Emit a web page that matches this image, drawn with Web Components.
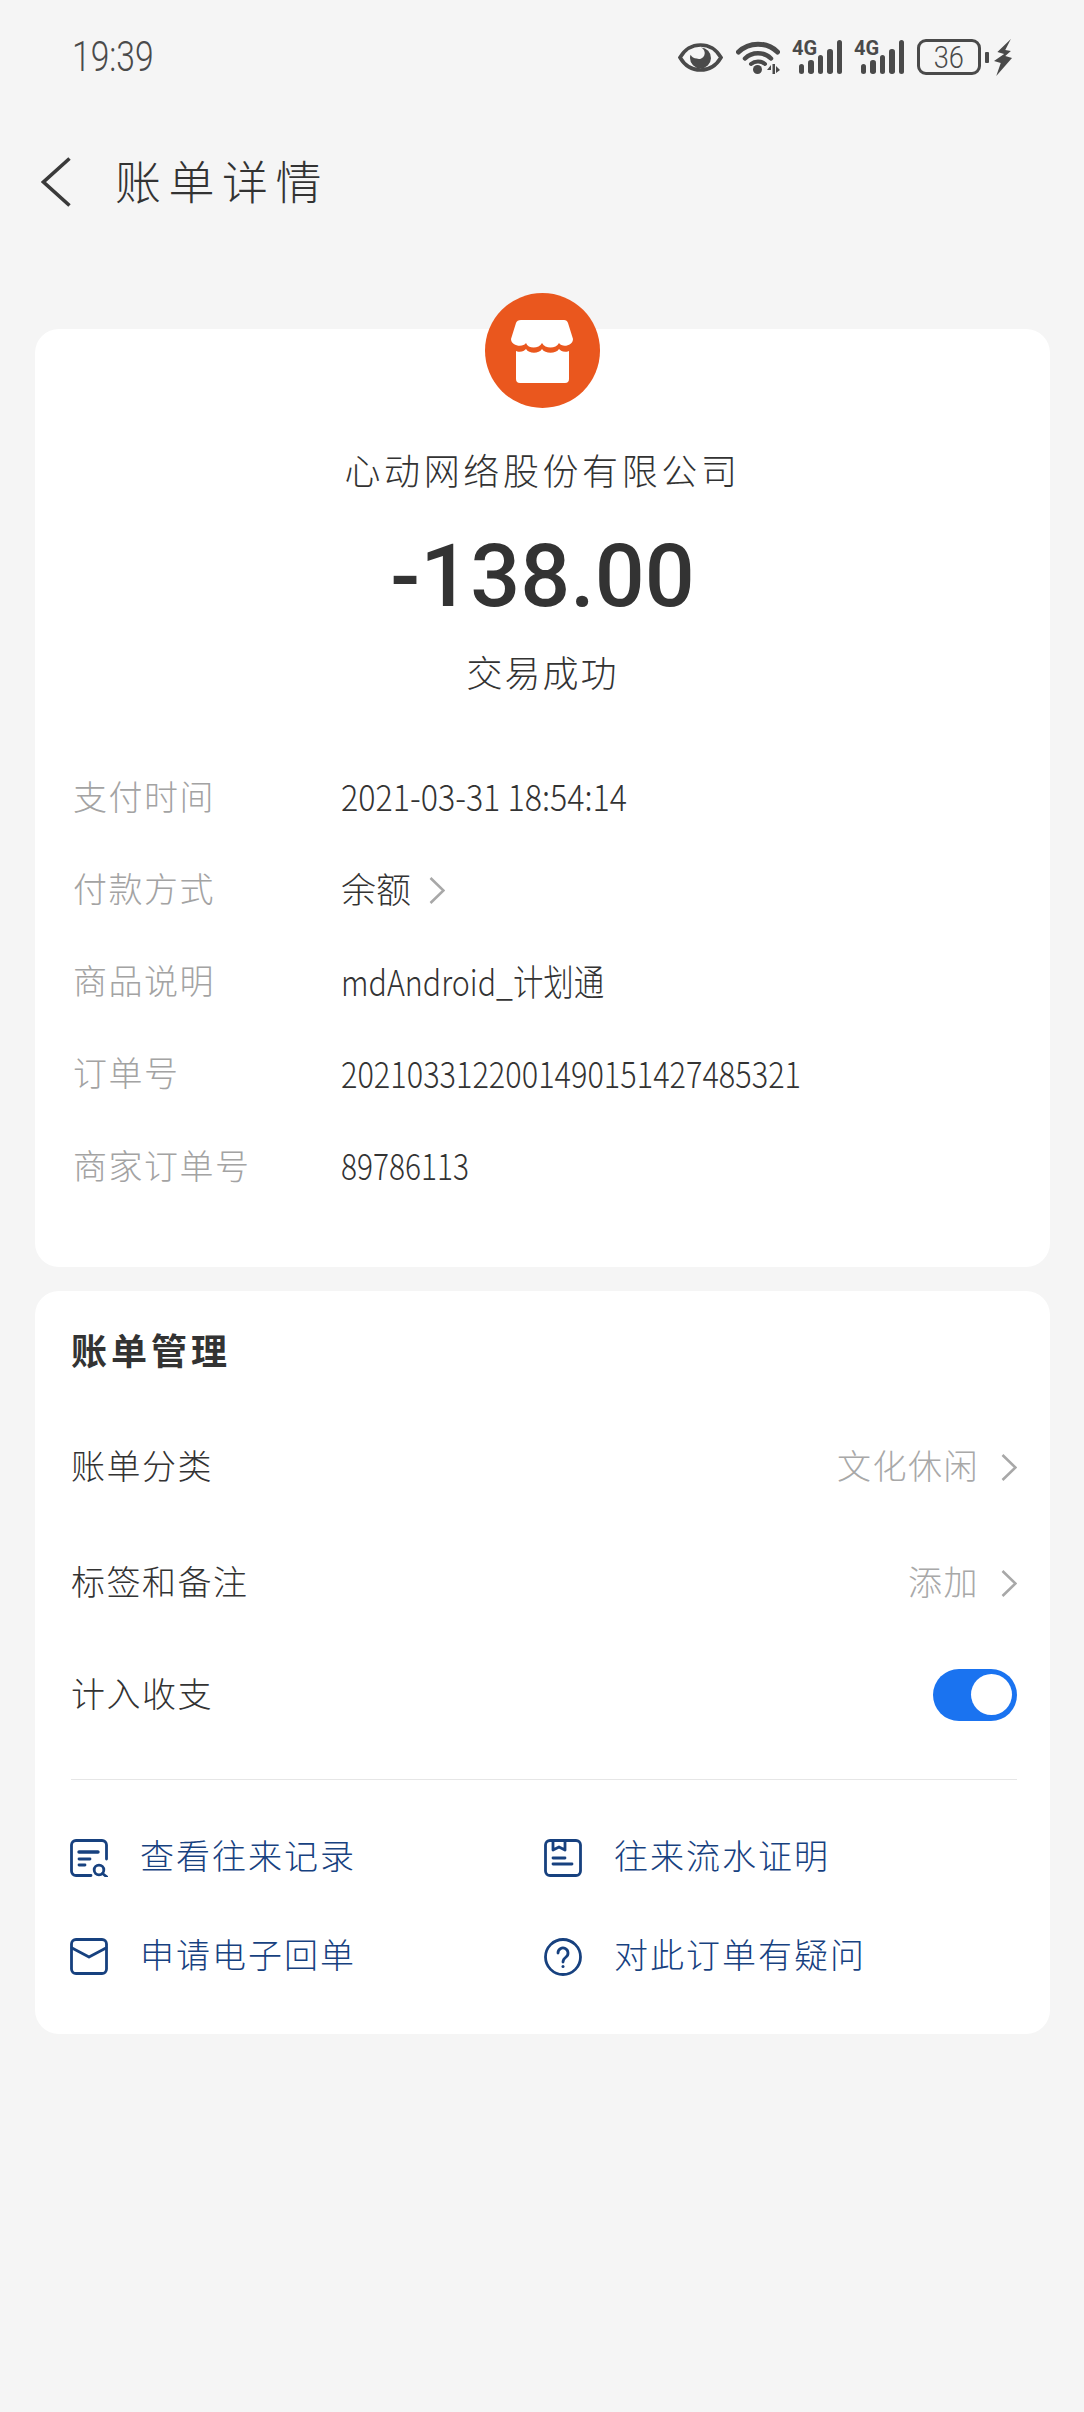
<!DOCTYPE html>
<html lang="zh">
<head>
<meta charset="utf-8">
<title>账单详情</title>
<style>
  html, body { margin: 0; padding: 0; }
  body {
    background: #f5f5f5;
    color: #333;
    font-family: "Noto Sans CJK SC", "Noto Sans", sans-serif;
    font-weight: 300;
    min-height: 2412px;
  }
</style>
</head>
<body>
<status-bar></status-bar>
<nav-header>账单详情</nav-header>

<bill-card style="margin-top:79px;height:938px">
  <bill-summary company="心动网络股份有限公司" amount="-138.00" state="交易成功"></bill-summary>
  <info-row label="支付时间" style="--squeeze:.895">2021-03-31 18:54:14</info-row>
  <info-row label="付款方式"><span style="font-size:35px">余额</span><chevron-icon style="margin:6px 0 0 18px"></chevron-icon></info-row>
  <info-row label="商品说明" style="--squeeze:.845">mdAndroid_计划通</info-row>
  <info-row label="订单号" style="--squeeze:.853">2021033122001490151427485321</info-row>
  <info-row label="商家订单号" style="--squeeze:.83">89786113</info-row>
</bill-card>

<bill-card style="margin-top:24px;height:743px">
  <manage-panel>
    <manage-row style="height:116px">账单分类<span slot="right">文化休闲</span><chevron-icon slot="right" style="margin-left:22px"></chevron-icon></manage-row>
    <manage-row style="height:116px">标签和备注<span slot="right">添加</span><chevron-icon slot="right" style="margin-left:22px"></chevron-icon></manage-row>
    <manage-row style="height:108px">计入收支<toggle-switch slot="right"></toggle-switch></manage-row>
    <link-item slot="links" icon="search">查看往来记录</link-item>
    <link-item slot="links" icon="book">往来流水证明</link-item>
    <link-item slot="links" icon="mail">申请电子回单</link-item>
    <link-item slot="links" icon="help">对此订单有疑问</link-item>
  </manage-panel>
</bill-card>

<script>
// status bar: clock on the left, indicators on the right
class SignalIcon extends HTMLElement {
  constructor() {
    super();
    this.root = this.attachShadow({mode: 'open'});
    this.root.innerHTML = `
    <style>
      :host { display: block; position: relative; width: 50px; height: 34px; }
      .bars { display: flex; align-items: flex-end; justify-content: flex-end; gap: 4px; height: 34px; }
      .bars i { display: block; width: 5.5px; background: #4a4a4a; border-radius: 2.75px; }
      .net {
        position: absolute; left: 0; top: 0;
        font: 700 20px/16px Roboto, sans-serif;
        color: #4a4a4a;
      }
    </style>
    <div class="bars">
      <i style="height:10px"></i><i style="height:14px"></i><i style="height:19px"></i><i style="height:25px"></i><i style="height:34px"></i>
    </div>
    <span class="net">4G</span>`;
  }
}
customElements.define('signal-icon', SignalIcon);

class StatusBar extends HTMLElement {
  constructor() {
    super();
    this.root = this.attachShadow({mode: 'open'});
    this.root.innerHTML = `
    <style>
      :host {
        display: flex; align-items: center; justify-content: space-between;
        box-sizing: border-box; height: 114px; padding: 0 72px 0 72px; color: #4a4a4a;
      }
      .time {
        display: inline-block; transform: scaleX(.8); transform-origin: left center;
        font: 300 42px/44px Roboto, sans-serif;
      }
      .icons { display: flex; align-items: center; }
      svg { display: block; }
      .battery {
        box-sizing: border-box; width: 64px; height: 36px; margin-left: 13px;
        border: 3px solid #4a4a4a; border-radius: 9px;
        display: flex; align-items: center; justify-content: center;
        font: 300 32px/30px Roboto, sans-serif;
      }
      .battery span { display: inline-block; transform: scaleX(.85); }
      .tip { width: 4px; height: 11px; margin-left: 4px; background: #4a4a4a; border-radius: 1px; }
    </style>
    <span class="time">19:39</span>
    <div class="icons">
      <svg width="45" height="29" viewBox="0 0 45 29">
        <path d="M2 14.5C7 6 14 2 22.5 2S38 6 43 14.5C38 23 31 27 22.5 27S7 23 2 14.5Z" fill="none" stroke="#4a4a4a" stroke-width="3.6"/>
        <path d="M23 4.5a10.500 10.500 0 1 1-11 10.500c0-1.200.2-2.300.6-3.300 1 2.300 3.500 3.800 6.100 3.800a5.800 5.800 0 0 0 4.300-11Z" fill="#4a4a4a"/>
      </svg>
      <svg width="44" height="34" viewBox="0 0 44 34" style="margin-left:13px">
        <path d="M2.500 12C13 1.500 31 1.500 41.500 12" fill="none" stroke="#4a4a4a" stroke-width="5" stroke-linecap="round"/>
        <path d="M9 18.500C16 11.500 28 11.500 35 18.500" fill="none" stroke="#4a4a4a" stroke-width="4.500" stroke-linecap="round"/>
        <path d="M15 24C19 20.500 25 20.500 29 24" fill="none" stroke="#4a4a4a" stroke-width="4" stroke-linecap="round"/>
        <circle cx="21.500" cy="29.500" r="4.500" fill="#4a4a4a"/>
        <path d="M35 25l-4 5h4zM36.500 24h2.500v10h-2.500zM40 26l4 4-4 3z" fill="#4a4a4a"/>
      </svg>
      <signal-icon style="margin-left:12px"></signal-icon>
      <signal-icon style="margin-left:12px"></signal-icon>
      <div class="battery"><span>36</span></div>
      <div class="tip"></div>
      <svg width="18" height="37" viewBox="0 0 16 37" preserveAspectRatio="none" style="margin-left:5px">
        <path d="M15 0L3 13l6 2L0 22l6 2-4 13L16 19l-6-2 5-5-5-1Z" fill="#4a4a4a"/>
      </svg>
    </div>`;
  }
}
customElements.define('status-bar', StatusBar);

class NavHeader extends HTMLElement {
  constructor() {
    super();
    this.root = this.attachShadow({mode: 'open'});
    this.root.innerHTML = `
    <style>
      :host {
        display: flex; align-items: center;
        box-sizing: border-box; height: 136px; padding-left: 41px;
        font-size: 46px; letter-spacing: 7.500px; color: #333;
      }
      svg { display: block; margin-right: 44px; }
      span { padding-bottom: 6px; }
    </style>
    <svg width="30" height="50" viewBox="0 0 30 50">
      <path d="M28.500 1.500L2.500 25l26 23.500" fill="none" stroke="#3a3a3a" stroke-width="3.600"/>
    </svg>
    <span><slot></slot></span>`;
  }
}
customElements.define('nav-header', NavHeader);

class BillCard extends HTMLElement {
  constructor() {
    super();
    this.root = this.attachShadow({mode: 'open'});
    this.root.innerHTML = `
    <style>
      :host {
        display: flow-root; box-sizing: border-box;
        margin: 0 34px 0 35px;
        background: #fff; border-radius: 24px;
      }
    </style>
    <slot></slot>`;
  }
}
customElements.define('bill-card', BillCard);

class BillSummary extends HTMLElement {
  constructor() {
    super();
    this.root = this.attachShadow({mode: 'open'});
    this.root.innerHTML = `
    <style>
      :host {
        display: flex; flex-direction: column; align-items: center;
        margin-top: -36px; margin-bottom: 48px; color: #333;
      }
      svg { display: block; width: 115px; height: 115px; }
      .company { margin-top: 31px; font-size: 36px; line-height: 60px; letter-spacing: 3.600px; }
      .amount {
        margin-top: 23px;
        font: 500 88px/108px Roboto, "Liberation Sans", sans-serif;
      }
      .state { margin-top: 11px; margin-bottom: 3px; font-size: 36px; line-height: 60px; letter-spacing: 2px; }
    </style>
    <svg viewBox="0 0 115 115">
      <circle cx="57.500" cy="57.500" r="57.500" fill="#ea571e"/>
      <path d="M88 46C88 53 77 55 74 50C71 56 60 56 57 50C54 56 43 56 41 50C38 55 26 53 26 46L31 30Q32 27 36 27H79Q82 27 83 30Z" fill="#fff"/>
      <path d="M31 58C36 60 39 58 41 56C44 61 54 61 57 56C60 61 71 61 74 56C76 58 79 60 84 58V86Q84 90 80 90H35Q31 90 31 86Z" fill="#fff"/>
    </svg>
    <div class="company"></div>
    <div class="amount"></div>
    <div class="state"></div>`;
    this.root.querySelector('.company').textContent = this.getAttribute('company');
    this.root.querySelector('.amount').textContent = this.getAttribute('amount');
    this.root.querySelector('.state').textContent = this.getAttribute('state');
  }
}
customElements.define('bill-summary', BillSummary);

class ChevronIcon extends HTMLElement {
  constructor() {
    super();
    this.root = this.attachShadow({mode: 'open'});
    this.root.innerHTML = `
    <style>
      :host { display: inline-block; width: 16px; height: 27px; vertical-align: middle; }
      svg { display: block; }
    </style>
    <svg width="16" height="27" viewBox="0 0 16 27">
      <path d="M1.500 1L14.500 13.500 1.500 26" fill="none" stroke="#a8a8a8" stroke-width="2.600"/>
    </svg>`;
  }
}
customElements.define('chevron-icon', ChevronIcon);

class InfoRow extends HTMLElement {
  constructor() {
    super();
    this.root = this.attachShadow({mode: 'open'});
    this.root.innerHTML = `
    <style>
      :host {
        display: flex; align-items: center;
        box-sizing: border-box; height: 92.250px; padding-left: 38px;
      }
      .label { width: 268px; flex: none; padding-bottom: 6px; font-size: 34px; letter-spacing: 1.500px; color: #a3a3a3; }
      .value {
        display: flex; align-items: center; white-space: nowrap; color: #333;
        padding-bottom: 6px; font-size: 36px;
        transform: scaleX(var(--squeeze, 1)); transform-origin: left center;
      }
    </style>
    <span class="label"></span>
    <span class="value"><slot></slot></span>`;
    this.root.querySelector('.label').textContent = this.getAttribute('label');
  }
}
customElements.define('info-row', InfoRow);

class ManagePanel extends HTMLElement {
  constructor() {
    super();
    this.root = this.attachShadow({mode: 'open'});
    this.root.innerHTML = `
    <style>
      :host { display: block; box-sizing: border-box; height: 100%; padding: 36px 33px 28px 36px; }
      h2 {
        margin: 0 0 32px; padding-bottom: 6px; box-sizing: border-box; height: 50px;
        font-size: 36px; line-height: 44px; font-weight: 700;
        letter-spacing: 4px; color: #333;
      }
      hr { margin: 30px 0 28px; border: 0; border-top: 1.500px solid #e6e6e6; }
      .links { display: grid; grid-template-columns: 474px 1fr; grid-auto-rows: 99px; }
    </style>
    <h2>账单管理</h2>
    <slot></slot>
    <hr>
    <div class="links"><slot name="links"></slot></div>`;
  }
}
customElements.define('manage-panel', ManagePanel);

class ManageRow extends HTMLElement {
  constructor() {
    super();
    this.root = this.attachShadow({mode: 'open'});
    this.root.innerHTML = `
    <style>
      :host {
        display: flex; align-items: center; justify-content: space-between;
        font-size: 34px; letter-spacing: 1.500px; color: #333;
      }
      .left { padding-bottom: 6px; }
      .right { display: flex; align-items: center; color: #a8a8a8; }
      ::slotted(span) { padding-bottom: 6px; }
    </style>
    <span class="left"><slot></slot></span>
    <span class="right"><slot name="right"></slot></span>`;
  }
}
customElements.define('manage-row', ManageRow);

class ToggleSwitch extends HTMLElement {
  constructor() {
    super();
    this.root = this.attachShadow({mode: 'open'});
    this.root.innerHTML = `
    <style>
      :host {
        display: block; box-sizing: border-box; width: 84px; height: 52px;
        padding: 5px; border-radius: 26px; background: #1a73f0;
      }
      i {
        display: block; width: 41px; height: 41px; margin-left: auto;
        border-radius: 50%; background: #fff;
      }
    </style>
    <i></i>`;
  }
}
customElements.define('toggle-switch', ToggleSwitch);

const LINK_ICONS = {
  search: `<path d="M21 36.500H6a4.500 4.500 0 0 1-4.500-4.500V6A4.500 4.500 0 0 1 6 1.500h26A4.500 4.500 0 0 1 36.500 6v14"/>
           <path d="M9 13h19" stroke-width="3.400"/><path d="M9 20h11"/><path d="M9 26h6"/>
           <circle cx="29" cy="31" r="4.800"/><path d="M32.500 34.500L37 38"/>`,
  book: `<rect x="1.500" y="1.500" width="35" height="35" rx="4.500"/>
         <path d="M9 2v9l6-3 6 3V2"/><path d="M9 19h12"/><path d="M9 25h19"/>`,
  mail: `<rect x="1.500" y="1.500" width="35" height="34" rx="4.500"/>
         <path d="M2 10l17 9 17-9"/>`,
  help: `<circle cx="19" cy="19" r="17.500"/>
         <path d="M14 15a5 5 0 1 1 8 4c-2 1.500-3 2.500-3 5"/>
         <circle cx="19" cy="28.500" r="1.500" fill="#17417f" stroke="none"/>`
};

class LinkItem extends HTMLElement {
  constructor() {
    super();
    this.root = this.attachShadow({mode: 'open'});
    this.root.innerHTML = `
    <style>
      :host {
        display: flex; align-items: center; gap: 32px;
        font-size: 34px; letter-spacing: 2px; color: #17417f;
      }
      svg { display: block; flex: none; margin-left: -1px; }
      span { padding-bottom: 6px; }
    </style>
    <svg width="38" height="38" viewBox="0 0 38 38" fill="none" stroke="#17417f" stroke-width="2.800" stroke-linecap="round" stroke-linejoin="round">
      ${LINK_ICONS[this.getAttribute('icon')]}
    </svg>
    <span><slot></slot></span>`;
  }
}
customElements.define('link-item', LinkItem);
</script>
</body>
</html>
